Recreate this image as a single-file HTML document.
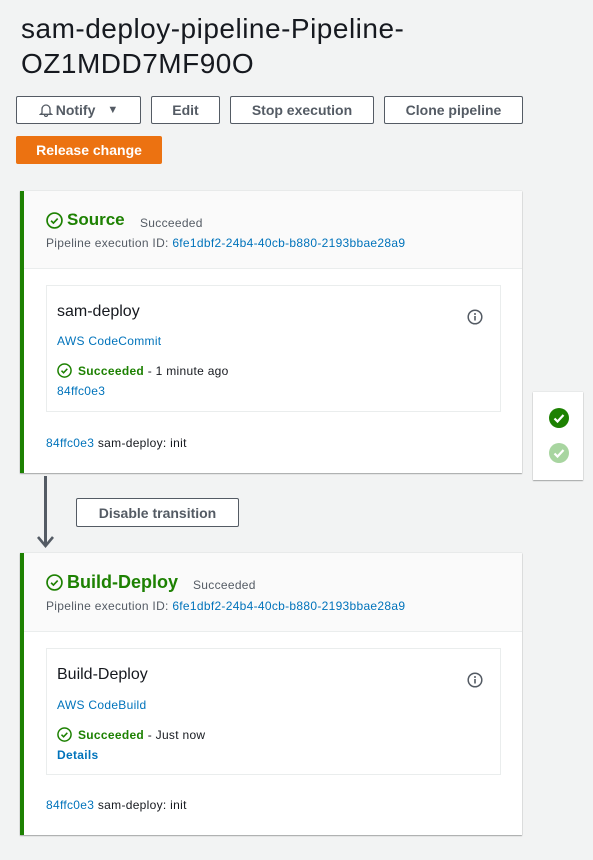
<!DOCTYPE html>
<html><head><meta charset="utf-8"><style>
*{margin:0;padding:0;box-sizing:border-box}
body{width:593px;height:860px;background:#f2f3f3;font-family:"Liberation Sans",sans-serif;color:#16191f;position:relative;overflow:hidden}
.a{position:absolute;white-space:nowrap}
h1{position:absolute;left:21px;top:11px;font-size:28px;letter-spacing:.5px;font-weight:normal;line-height:35px;color:#16191f}
.btn{position:absolute;top:96px;height:28px;border:1px solid #545b64;border-radius:2px;background:#fff;font-size:14px;font-weight:bold;color:#545b64;display:flex;align-items:center;justify-content:center}
.card{position:absolute;left:20px;width:502px;background:#fff;border-left:4px solid #1d8102;box-shadow:0 1px 1px rgba(0,0,0,.3),0 0 1px rgba(0,0,0,.2)}
.hd{position:absolute;left:0;top:0;right:0;height:78px;background:#fafafa;border-bottom:1px solid #eaeded}
.box{position:absolute;left:22px;width:455px;height:127px;border:1px solid #eaeded}
.g{color:#1d8102}
.l{color:#0073bb}
.s{font-size:12px;letter-spacing:.3px}
</style></head><body>
<h1>sam-deploy-pipeline-Pipeline-<br>OZ1MDD7MF90O</h1>
<div class="btn" style="left:16px;width:125px"><svg width="14" height="14" viewBox="0 0 14 14" style="margin-right:3px"><path d="M3 10V6a4 4 0 0 1 8 0v4l1.5 1.3h-11z M5.5 12a1.5 1.5 0 0 0 3 0" fill="none" stroke="#545b64" stroke-width="1.3"/></svg>Notify<span style="margin-left:12px;font-size:11px">▼</span></div>
<div class="btn" style="left:151px;width:69px">Edit</div>
<div class="btn" style="left:230px;width:144px">Stop execution</div>
<div class="btn" style="left:384px;width:139px">Clone pipeline</div>
<div class="btn" style="left:16px;top:136px;width:146px;background:#ec7211;border-color:#ec7211;color:#fff">Release change</div>

<div class="card" style="top:191px;height:282px">
 <div class="hd"></div>
 <svg class="a" style="left:22px;top:21px" width="17" height="17" viewBox="0 0 16 16"><circle cx="8" cy="8" r="7" fill="none" stroke="#1d8102" stroke-width="1.6"/><path d="M4.8 8.2l2.2 2.2 4-4.2" fill="none" stroke="#1d8102" stroke-width="1.6"/></svg>
 <div class="a g" style="left:43px;top:19px;font-size:17px;font-weight:bold">Source</div>
 <div class="a s" style="left:116px;top:25px;color:#545b64">Succeeded</div>
 <div class="a s" style="left:22px;top:45px;color:#545b64">Pipeline execution ID: <span class="l">6fe1dbf2-24b4-40cb-b880-2193bbae28a9</span></div>
 <div class="box" style="top:94px">
  <div class="a" style="left:10px;top:17px;font-size:16px">sam-deploy</div>
  <svg class="a" style="left:420px;top:23px" width="16" height="16" viewBox="0 0 16 16"><circle cx="8" cy="8" r="6.8" fill="none" stroke="#545b64" stroke-width="1.5"/><rect x="7.2" y="7" width="1.6" height="4.5" fill="#545b64"/><circle cx="8" cy="5" r="1" fill="#545b64"/></svg>
  <div class="a s l" style="left:10px;top:48px">AWS CodeCommit</div>
  <svg class="a" style="left:10px;top:77px" width="15" height="15" viewBox="0 0 16 16"><circle cx="8" cy="8" r="7" fill="none" stroke="#1d8102" stroke-width="1.6"/><path d="M4.8 8.2l2.2 2.2 4-4.2" fill="none" stroke="#1d8102" stroke-width="1.6"/></svg>
  <div class="a s" style="left:31px;top:78px"><span class="g" style="font-weight:bold">Succeeded</span> - 1 minute ago</div>
  <div class="a s l" style="left:10px;top:98px">84ffc0e3</div>
 </div>
 <div class="a s" style="left:22px;top:245px"><span class="l">84ffc0e3</span> sam-deploy: init</div>
</div>

<div class="a" style="left:533px;top:392px;width:50px;height:88px;background:#fff;box-shadow:0 1px 1px rgba(0,0,0,.3),0 0 1px rgba(0,0,0,.2)">
 <svg class="a" style="left:15px;top:15px" width="22" height="22" viewBox="0 0 22 22"><circle cx="11" cy="11" r="10" fill="#1d8102"/><path d="M6.5 11.5l3 3 6-6.5" fill="none" stroke="#fff" stroke-width="2.2"/></svg>
 <svg class="a" style="left:15px;top:50px" width="22" height="22" viewBox="0 0 22 22"><circle cx="11" cy="11" r="10" fill="#a8d5a0"/><path d="M6.5 11.5l3 3 6-6.5" fill="none" stroke="#fff" stroke-width="2.2"/></svg>
</div>

<div class="a" style="left:44px;top:476px;width:3px;height:70px;background:#545b64"></div>
<svg class="a" style="left:36px;top:533px" width="19" height="16" viewBox="0 0 19 16"><path d="M2 4l7.5 9L17 4" fill="none" stroke="#545b64" stroke-width="2.6"/></svg>
<div class="btn" style="left:76px;top:498px;width:163px;height:29px">Disable transition</div>

<div class="card" style="top:553px;height:282px">
 <div class="hd" style="height:79px"></div>
 <svg class="a" style="left:22px;top:21px" width="17" height="17" viewBox="0 0 16 16"><circle cx="8" cy="8" r="7" fill="none" stroke="#1d8102" stroke-width="1.6"/><path d="M4.8 8.2l2.2 2.2 4-4.2" fill="none" stroke="#1d8102" stroke-width="1.6"/></svg>
 <div class="a g" style="left:43px;top:19px;font-size:18px;font-weight:bold">Build-Deploy</div>
 <div class="a s" style="left:169px;top:25px;color:#545b64">Succeeded</div>
 <div class="a s" style="left:22px;top:46px;color:#545b64">Pipeline execution ID: <span class="l">6fe1dbf2-24b4-40cb-b880-2193bbae28a9</span></div>
 <div class="box" style="top:95px">
  <div class="a" style="left:10px;top:17px;font-size:16px">Build-Deploy</div>
  <svg class="a" style="left:420px;top:23px" width="16" height="16" viewBox="0 0 16 16"><circle cx="8" cy="8" r="6.8" fill="none" stroke="#545b64" stroke-width="1.5"/><rect x="7.2" y="7" width="1.6" height="4.5" fill="#545b64"/><circle cx="8" cy="5" r="1" fill="#545b64"/></svg>
  <div class="a s l" style="left:10px;top:49px">AWS CodeBuild</div>
  <svg class="a" style="left:10px;top:78px" width="15" height="15" viewBox="0 0 16 16"><circle cx="8" cy="8" r="7" fill="none" stroke="#1d8102" stroke-width="1.6"/><path d="M4.8 8.2l2.2 2.2 4-4.2" fill="none" stroke="#1d8102" stroke-width="1.6"/></svg>
  <div class="a s" style="left:31px;top:79px"><span class="g" style="font-weight:bold">Succeeded</span> - Just now</div>
  <div class="a s l" style="left:10px;top:99px;font-weight:bold">Details</div>
 </div>
 <div class="a s" style="left:22px;top:245px"><span class="l">84ffc0e3</span> sam-deploy: init</div>
</div>
</body></html>
